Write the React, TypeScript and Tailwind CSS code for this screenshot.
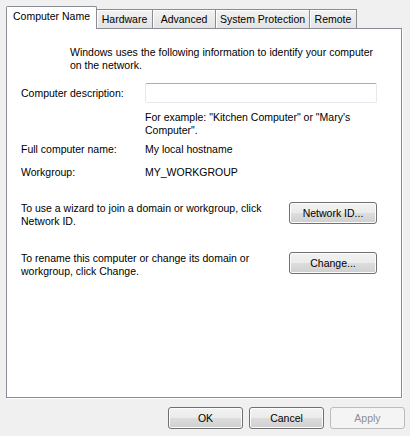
const tabs = ['Computer Name', 'Hardware', 'Advanced', 'System Protection', 'Remote']
const tabWidths = ['w-[91px]', 'w-[56px]', 'w-[63px]', 'w-[94px]', 'w-[47px]']

function WinButton({ label, disabled = false, wide = false }: { label: string; disabled?: boolean; wide?: boolean }) {
  return (
    <button
      type="button"
      disabled={disabled}
      className={
        (wide ? 'w-[88px] ' : 'w-[75px] ') +
        'h-[22px] shrink-0 rounded-[3px] border text-[10.5px] leading-none ' +
        (disabled
          ? 'border-[#bcbcbc] bg-[#f4f4f4] text-[#8f8f8f]'
          : 'border-[#707070] bg-[linear-gradient(to_bottom,#f2f2f2_0%,#ebebeb_50%,#dddddd_51%,#cfcfcf_100%)] text-black shadow-[inset_0_0_0_1px_#fcfcfc]')
      }
    >
      {label}
    </button>
  )
}

export default function App() {
  return (
    <div className="w-[410px] h-[436px] bg-[#f0f0f0] font-['Liberation_Sans',Arial,sans-serif] text-[10.5px] leading-[13px] text-black overflow-hidden whitespace-nowrap">
      <div className="pt-[6px] pl-[6px] pr-[8px]">
        {/* tab strip */}
        <div className="flex items-end h-[22px]">
          {tabs.map((t, i) =>
            i === 0 ? (
              <div
                key={t}
                className={tabWidths[i] + ' relative z-10 h-[23px] -mb-[1px] bg-white border border-b-0 border-[#898c95] rounded-t-[2px] flex items-center justify-center pb-[3px]'}
              >
                {t}
              </div>
            ) : (
              <div
                key={t}
                className={
                  tabWidths[i] +
                  ' h-[19px] border-t border-r border-[#898c95] bg-[linear-gradient(to_bottom,#f2f2f2,#e3e3e3)] flex items-center justify-center shadow-[inset_1px_1px_0_#ffffff]'
                }
              >
                {t}
              </div>
            )
          )}
        </div>

        {/* panel */}
        <div className="h-[370px] bg-white border border-[#898c95] shadow-[1px_1px_0_#ffffff] pl-[14px] pr-[24px]">
          <div className="pt-[17px] ml-[49px]">
            <div className="w-[303px] text-justify [text-align-last:justify]">
              Windows uses the following information to identify your computer
            </div>
            <div>on the network.</div>
          </div>

          <div className="mt-[11px] flex items-center">
            <div className="w-[124px]">Computer description:</div>
            <input
              type="text"
              className="w-[233px] h-[20px] bg-white border border-[#e3e9ef] border-t-[#abadb3] rounded-[2px] outline-none"
            />
          </div>

          <p className="mt-[8px] ml-[124px]">
            For example: "Kitchen Computer" or "Mary's
            <br />
            Computer".
          </p>

          <div className="mt-[6px] flex">
            <div className="w-[124px]">Full computer name:</div>
            <div>My local hostname</div>
          </div>

          <div className="mt-[10px] flex">
            <div className="w-[124px]">Workgroup:</div>
            <div>MY_WORKGROUP</div>
          </div>

          <div className="mt-[23px] flex justify-between items-start">
            <p>
              To use a wizard to join a domain or workgroup, click
              <br />
              Network ID.
            </p>
            <WinButton label="Network ID..." wide />
          </div>

          <div className="mt-[24px] flex justify-between items-start">
            <p>
              To rename this computer or change its domain or
              <br />
              workgroup, click Change.
            </p>
            <WinButton label="Change..." wide />
          </div>
        </div>

        {/* dialog buttons */}
        <div className="mt-[9px] flex justify-end gap-[6px] -mr-[3px]">
          <WinButton label="OK" />
          <WinButton label="Cancel" />
          <WinButton label="Apply" disabled />
        </div>
      </div>
    </div>
  )
}
